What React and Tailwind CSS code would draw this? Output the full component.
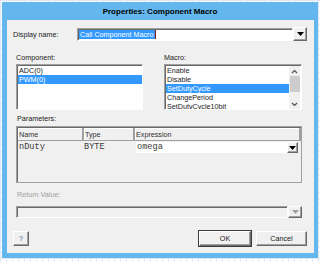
const Arrow = ({ color = "#000" }) => (
  <svg width="7" height="4" viewBox="0 0 7 4">
    <path d="M0 0h7L3.5 4z" fill={color} />
  </svg>
);

const Chevron = ({ up }) => (
  <svg width="7" height="5" viewBox="0 0 7 5">
    <path d={up ? "M1 4L3.5 1.5L6 4" : "M1 1L3.5 3.5L6 1"} fill="none" stroke="#505050" strokeWidth="1.2" />
  </svg>
);

const DropButton = ({ disabled, className = "" }) => (
  <div
    className={`flex items-center justify-center bg-[#f0f0f0] border border-t-white border-l-white border-b-[#696969] border-r-[#696969] shadow-[inset_-1px_-1px_0_#a0a0a0] ${className}`}
  >
    <Arrow color={disabled ? "#a0a0a0" : "#000"} />
  </div>
);

const sunken =
  "border border-t-[#a0a0a0] border-l-[#a0a0a0] border-b-white border-r-white shadow-[inset_1px_1px_0_#696969]";

const Button = ({ children, def, className = "" }) => (
  <div
    className={`h-[15px] flex items-center justify-center bg-[#f0f0f0] ${
      def ? "outline outline-1 outline-[#3c3c3c]" : ""
    } border border-t-white border-l-white border-b-[#696969] border-r-[#696969] shadow-[inset_-1px_-1px_0_#a0a0a0] ${className}`}
  >
    {children}
  </div>
);

export default function App() {
  const components = ["ADC(0)", "PWM(0)"];
  const macros = ["Enable", "Disable", "SetDutyCycle", "ChangePeriod", "SetDutyCycle10bit"];

  return (
    <div className="w-[320px] h-[262px] overflow-hidden bg-white bg-[linear-gradient(#dde9f6_1px,transparent_1px),linear-gradient(90deg,#dde9f6_1px,transparent_1px)] bg-[size:6px_6px] pt-[2px] pl-[2px] font-['Liberation_Sans',Arial,sans-serif] text-[7.2px] leading-[9px] text-[#1a1a1a]">
      <div className="w-[316px] h-[256px] bg-[#63b7ec] flex flex-col">
        <div className="h-[18px] flex items-center justify-center font-bold text-[8px] text-black">
          Properties: Component Macro
        </div>
        <div className="flex-1 ml-[5px] mr-[4px] mb-[5px] bg-[#f0f0f0] flex flex-col">
          {/* display name */}
          <div className="mt-[7px] h-[14px] pl-[6px] pr-[7px] flex items-center">
            <div className="w-[64px]">Display name:</div>
            <div className={`flex-1 h-[13px] bg-white ${sunken} flex items-center pl-[1px]`}>
              <span className="bg-[#3399ff] text-white px-[1px] h-[9px] border-r border-[#8b1a1a]">
                Call Component Macro
              </span>
            </div>
            <DropButton className="w-[14px] h-[14px]" />
          </div>

          {/* labels */}
          <div className="mt-[12px] h-[9px] flex pl-[9px]">
            <div className="w-[148px]">Component:</div>
            <div>Macro:</div>
          </div>

          {/* lists */}
          <div className="mt-[2px] h-[46px] flex pl-[9px] pr-[12px] gap-[21px]">
            <div className={`w-[127px] bg-white ${sunken} pt-[1px] pl-[1px] overflow-hidden`}>
              {components.map((c, i) => (
                <div
                  key={c}
                  className={`h-[9px] pl-[1px] ${i === 1 ? "bg-[#3399ff] text-white" : ""}`}
                >
                  {c}
                </div>
              ))}
            </div>
            <div className={`flex-1 bg-white ${sunken} pt-[1px] pl-[1px] flex overflow-hidden`}>
              <div className="flex-1">
                {macros.map((m, i) => (
                  <div
                    key={m}
                    className={`h-[9px] pl-[1px] ${i === 2 ? "bg-[#3399ff] text-white" : ""}`}
                  >
                    {m}
                  </div>
                ))}
              </div>
              <div className="w-[11px] mr-[1px] bg-[#f0f0f0] flex flex-col items-center">
                <div className="h-[10px] flex items-center">
                  <Chevron up />
                </div>
                <div className="w-[10px] h-[16px] bg-[#cdcdcd]" />
                <div className="flex-1" />
                <div className="h-[10px] flex items-center">
                  <Chevron />
                </div>
              </div>
            </div>
          </div>

          {/* parameters */}
          <div className="mt-[4px] h-[9px] pl-[10px]">Parameters:</div>
          <div className="mt-[3px] h-[57px] ml-[9px] mr-[12px] border border-[#a0a0a0] shadow-[inset_1px_1px_0_#696969] flex flex-col">
            <div className="h-[13px] grid grid-cols-[66px_51px_1fr] ml-[1px] mt-[1px]">
              {["Name", "Type", "Expression"].map((h) => (
                <div
                  key={h}
                  className="flex items-center pl-[1px] text-[#303030] bg-[#f0f0f0] border-r-2 border-b border-r-[#a0a0a0] border-b-[#a0a0a0] shadow-[inset_1px_1px_0_white]"
                >
                  {h}
                </div>
              ))}
            </div>
            <div className="h-[13px] grid grid-cols-[66px_51px_1fr] ml-[1px] items-center font-['Liberation_Mono','Courier_New',monospace] text-[8.6px] text-[#3a3a3a]">
              <div className="pl-[1px]">nDuty</div>
              <div>BYTE</div>
              <div className="flex items-center h-[12px] pr-[3px]">
                <div className="flex-1 h-[11px] bg-white ml-[1px] flex items-center pl-[1px] leading-[9px]">
                  omega
                </div>
                <DropButton className="w-[11px] h-[11px]" />
              </div>
            </div>
          </div>

          {/* return value */}
          <div className="mt-[7px] h-[9px] pl-[10px] text-[#a0a0a0]">Return Value:</div>
          <div className="mt-[7px] h-[12px] ml-[9px] mr-[12px] flex">
            <div className={`flex-1 ${sunken} bg-[#f0f0f0]`} />
            <DropButton disabled className="w-[14px] h-[12px]" />
          </div>

          {/* buttons */}
          <div className="mt-[13px] pl-[6px] pr-[7px] flex items-center">
            <Button className="w-[16px] text-[#3a5a9a]">?</Button>
            <div className="flex-1" />
            <Button def className="w-[52px]">OK</Button>
            <Button className="w-[51px] ml-[5px]">Cancel</Button>
          </div>
        </div>
      </div>
    </div>
  );
}
